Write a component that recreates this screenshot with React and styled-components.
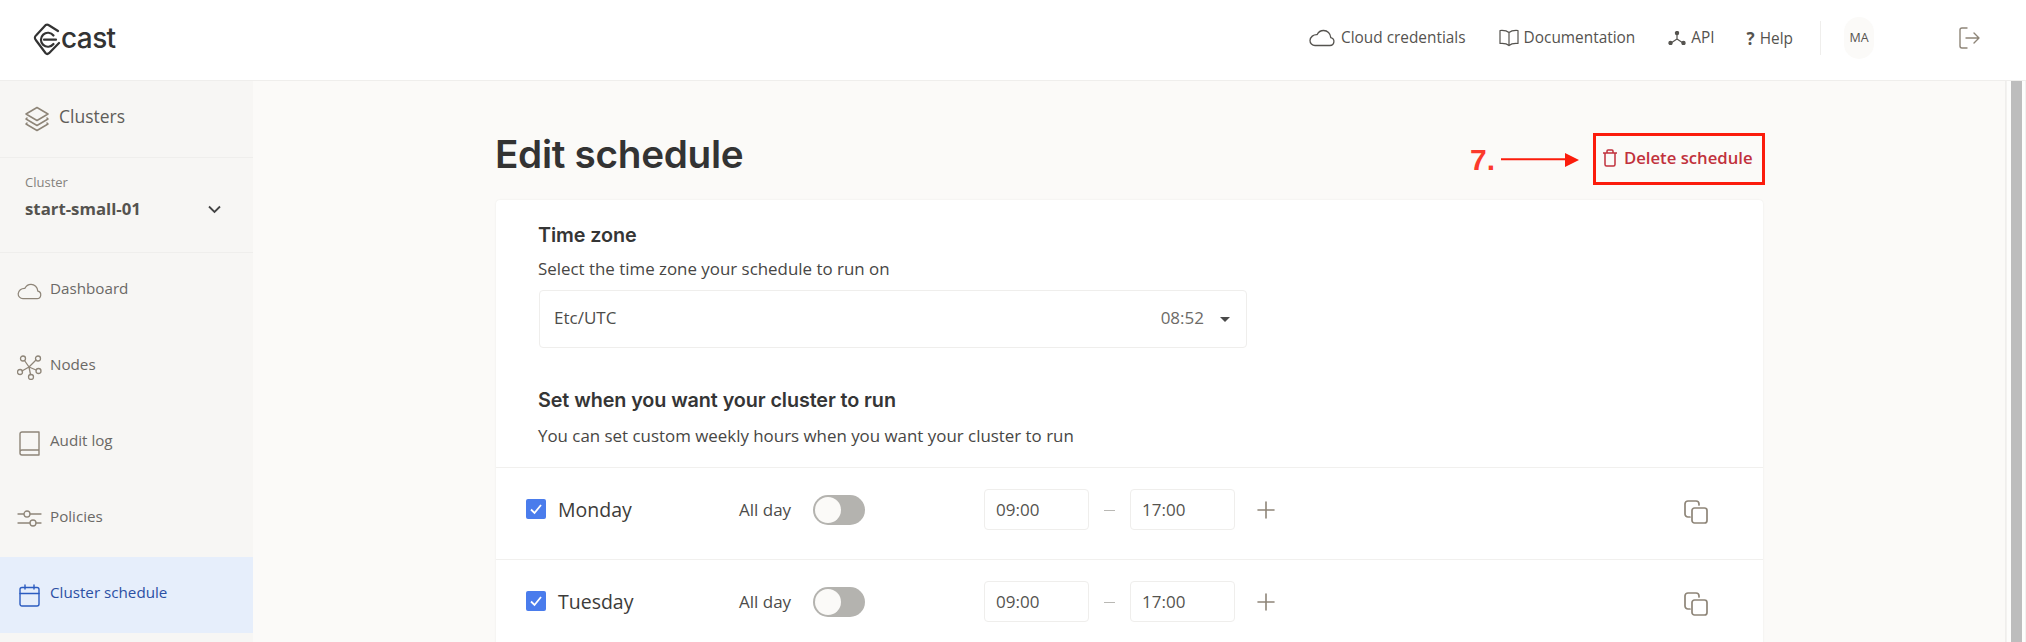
import React from "react";
import styled, { createGlobalStyle } from "styled-components";

const Global = createGlobalStyle`
  html, body { margin: 0; padding: 0; height: 642px; overflow: hidden; background: #fbfaf8; }
  * { box-sizing: border-box; }
  body { font-family: "Open Sans", "Noto Sans", sans-serif; color: #3a3a3a; }
`;
const Page = styled.div`width: 2026px; height: 642px; display: flex; flex-direction: column; overflow: hidden;`;
const Header = styled.header`
  height: 81px; flex: none; background: #fff; border-bottom: 1px solid #efeeec;
  display: flex; align-items: center; padding: 0 46px 5px 33px; color: #55534f;
`;
const Logo = styled.div`display: flex; align-items: center; color: #333; margin-right: auto; padding-top: 3px;`;
const LogoText = styled.span`font-family: "Inter", sans-serif; font-weight: 500; font-size: 28px; letter-spacing: -0.6px; line-height: 1; margin-left: -1px; padding-bottom: 3px;`;
const NavItem = styled.a`
  display: flex; align-items: center; gap: ${p => p.$gap || 5}px; font-size: 15.4px; font-weight: 400; color: #55534f;
  margin-left: ${p => p.$ml || 0}px; padding-top: ${p => p.$pt || 0}px; white-space: nowrap;
`;
const HelpMark = styled.b`font-size: 17px; font-weight: 700;`;
const Divider = styled.div`width: 1px; height: 34px; background: #efeeec; margin-left: 27px;`;
const Avatar = styled.div`
  width: 30px; height: 42px; border-radius: 15px; background: #fbfaf8; margin-left: 23px;
  display: flex; align-items: center; justify-content: center; font-size: 12.5px; color: #55534f;
`;
const Logout = styled.div`display: flex; margin-left: 84px; color: #8e8578;`;
const Body = styled.div`flex: 1; display: flex; min-height: 0;`;
const Sidebar = styled.aside`width: 253px; flex: none; background: #f7f6f4; display: flex; flex-direction: column;`;
const SideHead = styled.div`
  height: 77px; flex: none; border-bottom: 1px solid #efeeec; display: flex; align-items: center;
  padding: 0 0 0 25px; gap: 10px; font-size: 17.5px; color: #5f5d59;
`;
const ClusterBox = styled.div`
  height: 95px; flex: none; border-bottom: 1px solid #efeeec; padding: 15px 32px 0 25px;
`;
const ClusterLabel = styled.div`font-size: 13px; color: #85827d; line-height: 18px;`;
const ClusterValue = styled.div`
  display: flex; align-items: center; justify-content: space-between; font-size: 16.8px; font-weight: 700;
  color: #55534f; line-height: 24px; margin-top: 6px;
`;
const SideItem = styled.div`
  height: 76px; flex: none; display: flex; align-items: center; gap: 8px; padding-left: 17px;
  background: ${p => p.$active ? "#e6eefb" : "transparent"};
  color: ${p => p.$active ? "#2c50a4" : "#6b6966"};
  font-size: 15.2px; font-weight: 500;
`;
const SideLabel = styled.span`position: relative; top: -3px;`;
const IconSlot = styled.span`display: flex; color: ${p => p.$color || "#8e8578"}; padding: 0 ${p => p.$px || 0}px;`;
const Main = styled.main`flex: 1; min-width: 0; padding: 0 0 0 243px; border-right: 1px solid #efeeec;`;
const Scrollbar = styled.div`
  width: 20px; flex: none; background: #fdfdfc; padding: 0 3px 0 4px; border-left: 1px solid #f3f2f0; border-right: 1px solid #f3f2f0;
`;
const Thumb = styled.div`width: 11px; height: 100%; background: #bdbdbd;`;
const TitleRow = styled.div`
  width: 1269px; height: 119px; display: flex; align-items: flex-start; justify-content: space-between; position: relative;
`;
const Title = styled.h1`
  margin: 50px 0 0 -1px; font-family: "Inter", sans-serif; font-weight: 600; font-size: 38.7px; line-height: 46px;
  color: #333; letter-spacing: -0.3px;
`;
const DeleteBtn = styled.button`
  margin-top: 52px; width: 172px; height: 52px; border: 3px solid #fb1c0c; background: transparent; padding: 0 0 3px 6px;
  display: flex; align-items: center; gap: 6px; color: #c1313c; font: 600 16.7px "Open Sans", sans-serif; white-space: nowrap;
`;
const Note = styled.div`
  position: absolute; right: 186px; top: 59px; display: flex; align-items: center; gap: 6px;
`;
const NoteText = styled.span`font: 700 30px/40px "Liberation Sans", sans-serif; color: #fb3a2c;`;
const Card = styled.section`
  width: 1267px; background: #fff; border-radius: 4px; box-shadow: 0 0 2px rgba(0,0,0,.08);
  padding-top: 20px; height: 500px;
`;
const Block = styled.div`padding: 0 0 0 42px;`;
const Heading = styled.h2`
  margin: 0; font-family: "Inter", sans-serif; font-weight: 600; font-size: 19.8px; line-height: 30px; color: #353535;
  letter-spacing: -0.1px;
`;
const Sub = styled.p`margin: ${p => p.$mt}px 0 0; font-size: 16.9px; line-height: 26px; color: #474644;`;
const Select = styled.div`
  width: 708px; height: 58px; margin: 8px 0 0 1px; border: 1px solid #efeeec; border-radius: 4px; display: flex; align-items: center;
  padding: 0 16px 3px 14px; font-size: 17px; color: #4d4c4a;
`;
const SelectTime = styled.span`margin-left: auto; color: #6d6b67;`;
const Caret = styled.span`
  margin: 3px 0 0 16px; width: 0; height: 0; border-left: 5px solid transparent; border-right: 5px solid transparent; border-top: 5px solid #4a4a4a;
`;
const SpacedBlock = styled(Block)`margin-top: 37px; height: 82px;`;
const Row = styled.div`
  height: 92px; border-top: 1px solid #f1f0ee; padding: 21px 55px 0 30px; display: flex; align-items: flex-start;
`;
const Check = styled.span`
  width: 20px; height: 20px; margin-top: 10px; border-radius: 2px; background: #4a7cec; flex: none; display: flex; align-items: center; justify-content: center;
`;
const Day = styled.span`width: 181px; margin-left: 12px; font-size: 19.5px; font-weight: 500; line-height: 41px; color: #3d3c3a;`;
const AllDay = styled.span`width: 74px; font-size: 17px; line-height: 41px; color: #4d4c4a;`;
const Toggle = styled.span`
  width: 52px; height: 30px; margin-top: 6px; border-radius: 15px; background: #b4b3af; padding: 2px; flex: none; display: flex;
`;
const Knob = styled.span`width: 26px; height: 26px; border-radius: 50%; background: #fbfaf8;`;
const TimeInput = styled.div`
  width: 105px; height: 41px; margin-left: ${p => p.$ml || 0}px; border: 1px solid #efeeec; border-radius: 4px; padding-left: 11px; font-size: 17px; line-height: 39px; color: #55534f; flex: none;
`;
const Dash = styled.span`width: 11px; height: 1px; margin: 21px 15px 0; background: #b9b8b4; flex: none;`;
const Plus = styled.span`display: flex; margin: 12px 0 0 22px; color: #8e8578;`;
const Copy = styled.span`display: flex; margin: 11px 0 0 auto; color: #8e8578;`;

const Stroke = ({ size = 24, w, h, sw = 1.5, children }) => (
  <svg width={w || size} height={h || size} viewBox={`0 0 ${w || size} ${h || size}`} fill="none" stroke="currentColor" strokeWidth={sw} strokeLinecap="round" strokeLinejoin="round">{children}</svg>
);
const Cloud = ({ w = 26, h = 18 }) => (
  <svg width={w} height={h} viewBox="0 0 26 18" fill="none" stroke="currentColor" strokeWidth="1.3" strokeLinejoin="round">
    <path d="M6 16.5h15a4 4 0 0 0 .8-7.9C21.5 4.4 18.4 1.5 14.6 1.5c-2.9 0-5.3 1.7-6.4 4.1C4.5 5.3 1.2 8 1 11.5c-.1 2.7 2.2 5 5 5Z" />
  </svg>
);
const DayRow = ({ day }) => (
  <Row>
    <Check>
      <svg width="14" height="12" viewBox="0 0 14 12" fill="none" stroke="#fff" strokeWidth="1.8"><path d="M2 6.5 5.5 10 12 2" /></svg>
    </Check>
    <Day>{day}</Day>
    <AllDay>All day</AllDay>
    <Toggle><Knob /></Toggle>
    <TimeInput $ml={119}>09:00</TimeInput>
    <Dash />
    <TimeInput>17:00</TimeInput>
    <Plus><Stroke size={18} sw={1.6}><path d="M9 1v16M1 9h16" /></Stroke></Plus>
    <Copy>
      <Stroke size={24} sw={1.7}><path d="M6 17H4a3 3 0 0 1-3-3V4a3 3 0 0 1 3-3h8a3 3 0 0 1 3 3v1" /><rect x="8" y="8" width="15" height="15" rx="2.5" /></Stroke>
    </Copy>
  </Row>
);

export default function App() {
  return (
    <Page>
      <Global />
      <Header>
        <Logo>
          <svg width="29" height="33" viewBox="0 0 29 33" fill="none" stroke="#333" strokeWidth="2.2" strokeLinejoin="round" strokeLinecap="round">
            <path d="M25 8 15.500 2a2.500 2.500 0 0 0-2.800 0L3 12.500a3 3 0 0 0-.2 4.500L12.500 30a2.500 2.500 0 0 0 3.500.2L26 20" />
            <path d="M20.500 12.500A7 7 0 1 0 20.500 21" />
            <path d="M11 16.700h12" />
          </svg>
          <LogoText>cast</LogoText>
        </Logo>
        <NavItem $gap={6}><Cloud />Cloud credentials</NavItem>
        <NavItem $ml={33}>
          <Stroke w={20} h={18} sw={1.2}><path d="M10 3.500C8 1.800 4.500 1.200 1 1.500v13c3.500-.3 7 .2 9 2 2-1.800 5.500-2.300 9-2v-13c-3.500-.3-7 .3-9 2Zm0 0v13" /></Stroke>
          Documentation
        </NavItem>
        <NavItem $ml={33}>
          <svg width="18" height="14" viewBox="0 0 18 14" fill="#55534f" stroke="#55534f" strokeWidth="1.2"><path d="M9 2v6M9 8l-6 4M9 8l6 4" fill="none" /><circle cx="9" cy="2" r="1.6" /><circle cx="2.500" cy="12" r="1.6" /><circle cx="15.500" cy="12" r="1.6" /></svg>
          API
        </NavItem>
        <NavItem $ml={32} $pt={2}><HelpMark>?</HelpMark>Help</NavItem>
        <Divider />
        <Avatar>MA</Avatar>
        <Logout>
          <Stroke w={22} h={22} sw={1.4}><path d="M9 1H4a2 2 0 0 0-2 2v16a2 2 0 0 0 2 2h5" /><path d="M8 11h13M16 6l5 5-5 5" /></Stroke>
        </Logout>
      </Header>
      <Body>
        <Sidebar>
          <SideHead>
            <IconSlot>
              <Stroke w={24} h={26} sw={1.5}><path d="M12 1.500 23 8l-11 6.500L1 8Z" /><path d="M2 12l-1 1 11 6.500L23 13l-1-1" /><path d="M2 17l-1 1 11 6.500L23 18l-1-1" /></Stroke>
            </IconSlot>
            <SideLabel>Clusters</SideLabel>
          </SideHead>
          <ClusterBox>
            <ClusterLabel>Cluster</ClusterLabel>
            <ClusterValue>
              start-small-01
              <svg width="13" height="9" viewBox="0 0 13 9" fill="none" stroke="#444" strokeWidth="1.800"><path d="M1 1.500 6.500 7 12 1.500" /></svg>
            </ClusterValue>
          </ClusterBox>
          <SideItem>
            <IconSlot><Cloud w={25} h={17} /></IconSlot>
            <SideLabel>Dashboard</SideLabel>
          </SideItem>
          <SideItem>
            <IconSlot>
              <Stroke size={25} sw={1.3}>
                <circle cx="6" cy="3.500" r="2.500" /><circle cx="21" cy="3.500" r="2.500" /><circle cx="3" cy="17" r="2.500" /><circle cx="21.500" cy="16" r="2.500" /><circle cx="14" cy="22" r="2.500" />
                <path d="M7.500 5.500 12 12M19 5 12 12M5 16l7-4M19 15l-7-3M13.500 19.500 12 12" />
              </Stroke>
            </IconSlot>
            <SideLabel>Nodes</SideLabel>
          </SideItem>
          <SideItem>
            <IconSlot $px={2}>
              <Stroke w={21} h={25} sw={1.4}><path d="M20 1H3a2 2 0 0 0-2 2v19a2 2 0 0 0 2 2h17ZM1 21a2 2 0 0 1 2-2h17" /></Stroke>
            </IconSlot>
            <SideLabel>Audit log</SideLabel>
          </SideItem>
          <SideItem>
            <IconSlot>
              <Stroke w={25} h={18} sw={1.3}><path d="M1 4h6M13 4h11M1 13h12M19 13h5" /><circle cx="10" cy="4" r="3" /><circle cx="16" cy="13" r="3" /></Stroke>
            </IconSlot>
            <SideLabel>Policies</SideLabel>
          </SideItem>
          <SideItem $active>
            <IconSlot $color="#2c5cc0" $px={2}>
              <Stroke w={21} h={23} sw={1.4}><rect x="1" y="3.500" width="19" height="18.500" rx="2" /><path d="M1 9.500h19M6 1v4M15 1v4" /></Stroke>
            </IconSlot>
            <SideLabel>Cluster schedule</SideLabel>
          </SideItem>
        </Sidebar>
        <Main>
          <TitleRow>
            <Title>Edit schedule</Title>
            <Note>
              <NoteText>7.</NoteText>
              <svg width="78" height="14" viewBox="0 0 78 14" fill="#fb1c0c"><path d="M0 6h64V6.500H0z" stroke="#fb1c0c" strokeWidth="1.500" /><path d="M64 0l14 7-14 7z" /></svg>
            </Note>
            <DeleteBtn>
              <svg width="16" height="18" viewBox="0 0 16 18" fill="none" stroke="#c1313c" strokeWidth="1.500" strokeLinejoin="round"><path d="M1 4h14M5 4V2a1 1 0 0 1 1-1h4a1 1 0 0 1 1 1v2M3 4v11.500A1.500 1.500 0 0 0 4.500 17h7a1.500 1.500 0 0 0 1.500-1.500V4" /></svg>
              Delete schedule
            </DeleteBtn>
          </TitleRow>
          <Card>
            <Block>
              <Heading>Time zone</Heading>
              <Sub $mt={6}>Select the time zone your schedule to run on</Sub>
              <Select>Etc/UTC<SelectTime>08:52</SelectTime><Caret /></Select>
            </Block>
            <SpacedBlock>
              <Heading>Set when you want your cluster to run</Heading>
              <Sub $mt={8}>You can set custom weekly hours when you want your cluster to run</Sub>
            </SpacedBlock>
            <DayRow day="Monday" />
            <DayRow day="Tuesday" />
          </Card>
        </Main>
        <Scrollbar><Thumb /></Scrollbar>
      </Body>
    </Page>
  );
}
